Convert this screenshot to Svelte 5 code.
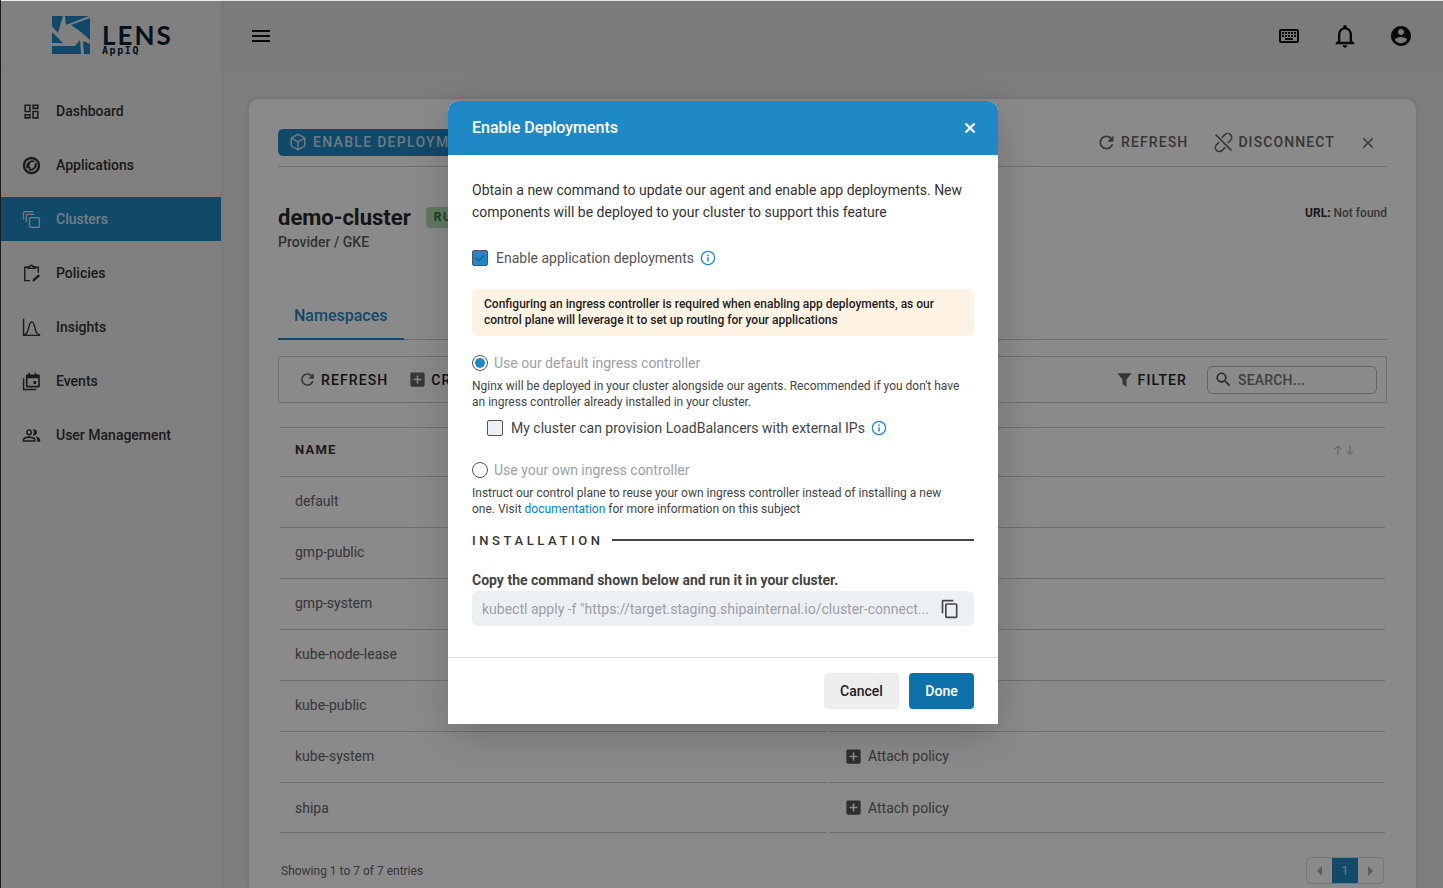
<script>
	const icons = {
		dashboard: 'M19 5v2h-4V5h4M9 5v6H5V5h4m10 8v6h-4v-6h4M9 17v2H5v-2h4M21 3h-8v6h8V3zM11 3H3v10h8V3zm10 8h-8v10h8V11zm-10 4H3v6h8v-6z',
		menu: 'M3 18h18v-2H3v2zm0-5h18v-2H3v2zm0-7v2h18V6H3z',
		keyboard: 'M20 7v10H4V7h16m0-2H4c-1.1 0-1.99.9-1.99 2L2 17c0 1.1.9 2 2 2h16c1.1 0 2-.9 2-2V7c0-1.1-.9-2-2-2zm-9 3h2v2h-2zm0 3h2v2h-2zM8 8h2v2H8zm0 3h2v2H8zm-3 0h2v2H5zm0-3h2v2H5zm3 6h8v2H8zm6-3h2v2h-2zm0-3h2v2h-2zm3 3h2v2h-2zm0-3h2v2h-2z',
		bell: 'M12 22c1.1 0 2-.9 2-2h-4c0 1.1.9 2 2 2zm6-6v-5c0-3.07-1.63-5.64-4.5-6.32V4c0-.83-.67-1.5-1.5-1.5s-1.5.67-1.5 1.5v.68C7.64 5.36 6 7.92 6 11v5l-2 2v1h16v-1l-2-2zm-2 1H8v-6c0-2.48 1.51-4.5 4-4.5s4 2.02 4 4.5v6z',
		account: 'M12 2C6.48 2 2 6.48 2 12s4.48 10 10 10 10-4.48 10-10S17.52 2 12 2zm0 3c1.66 0 3 1.34 3 3s-1.34 3-3 3-3-1.34-3-3 1.34-3 3-3zm0 14.2c-2.5 0-4.71-1.28-6-3.22.03-1.99 4-3.08 6-3.08 1.99 0 5.97 1.09 6 3.08-1.29 1.94-3.5 3.22-6 3.22z',
		users: 'M16.67 13.13C18.04 14.06 19 15.32 19 17v3h4v-3c0-2.18-3.57-3.47-6.33-3.87zM15 12c2.21 0 4-1.79 4-4s-1.79-4-4-4c-.47 0-.91.1-1.33.24C14.5 5.27 15 6.58 15 8s-.5 2.73-1.33 3.76c.42.14.86.24 1.33.24zM9 12c2.21 0 4-1.79 4-4s-1.79-4-4-4-4 1.79-4 4 1.79 4 4 4zm0-6c1.1 0 2 .9 2 2s-.9 2-2 2-2-.9-2-2 .9-2 2-2zM9 13c-2.67 0-8 1.34-8 4v3h16v-3c0-2.66-5.33-4-8-4zm6 5H3v-.99C3.2 16.29 6.3 15 9 15s5.8 1.29 6 2z',
		refresh: 'M17.65 6.35C16.2 4.9 14.21 4 12 4c-4.42 0-7.99 3.58-7.99 8s3.57 8 7.99 8c3.73 0 6.84-2.55 7.73-6h-2.08c-.82 2.33-3.04 4-5.65 4-3.31 0-6-2.69-6-6s2.69-6 6-6c1.66 0 3.14.69 4.22 1.78L13 11h7V4l-2.35 2.35z',
		search: 'M15.5 14h-.79l-.28-.27C15.41 12.59 16 11.11 16 9.5 16 5.91 13.09 3 9.5 3S3 5.91 3 9.5 5.91 16 9.5 16c1.61 0 3.09-.59 4.23-1.57l.27.28v.79l5 4.99L20.49 19l-4.99-5zm-6 0C7.01 14 5 11.99 5 9.5S7.01 5 9.5 5 14 7.01 14 9.5 11.99 14 9.5 14z',
		add: 'M19 3H5c-1.11 0-2 .9-2 2v14c0 1.1.89 2 2 2h14c1.1 0 2-.9 2-2V5c0-1.1-.9-2-2-2zm-2 10h-4v4h-2v-4H7v-2h4V7h2v4h4v2z',
		copy: 'M16 1H4c-1.1 0-2 .9-2 2v14h2V3h12V1zm3 4H8c-1.1 0-2 .9-2 2v14c0 1.1.9 2 2 2h11c1.1 0 2-.9 2-2V7c0-1.1-.9-2-2-2zm0 16H8V7h11v14z',
		close: 'M19 6.41L17.59 5 12 10.59 6.41 5 5 6.41 10.59 12 5 17.59 6.41 19 12 13.41 17.59 19 19 17.59 13.41 12z',
		filter: 'M3 4h18l-6.500 8v9l-5-3v-6z'
	};

	const nav = [
		{ label: 'Dashboard', icon: 'dashboard' },
		{ label: 'Applications', icon: 'apps' },
		{ label: 'Clusters', icon: 'clusters', active: true },
		{ label: 'Policies', icon: 'policies' },
		{ label: 'Insights', icon: 'insights' },
		{ label: 'Events', icon: 'events' },
		{ label: 'User Management', icon: 'users' }
	];

	const namespaces = ['default', 'gmp-public', 'gmp-system', 'kube-node-lease', 'kube-public', 'kube-system', 'shipa'];
</script>

{#snippet icon(d, cls = '')}
	<svg class="icon {cls}" viewBox="0 0 24 24" fill="currentColor" aria-hidden="true"><path {d} /></svg>
{/snippet}

{#snippet info()}
	<svg class="info" viewBox="0 0 16 16" fill="none" stroke="currentColor" stroke-width="1.3" aria-hidden="true">
		<circle cx="8" cy="8" r="6.6" />
		<path d="M8 7.2v4.2" stroke-width="1.5" />
		<path d="M8 4.4v1.5" stroke-width="1.5" />
	</svg>
{/snippet}

<div class="app">
	<aside class="sidebar">
		<div class="brand">
			<svg class="mark" viewBox="0 0 38 38" aria-hidden="true">
				<path d="M0 0h11L6 17 0 10zM13 0h24L14 9zM19 9 38 2v22l-9-8zM31 25l7 3v10h-6zM16 38l12-14 1 14zM0 38v-8h23l-7 8zM0 16l11 11H0z" />
			</svg>
			<div class="wordmark">
				<span class="lens">LENS</span>
				<span class="appiq">AppIQ</span>
			</div>
		</div>
		<nav class="nav">
			{#each nav as item}
				<div class="nav-item" class:active={item.active}>
					{#if item.icon === 'apps'}
						<svg class="icon" viewBox="0 0 24 24" fill="none" stroke="currentColor" aria-hidden="true">
							<circle cx="12" cy="12" r="9.500" stroke-width="3" />
							<path d="M7 15.500c-2-5 3-10.500 8.500-8.500M17 8.500c2 5-3 10.500-8.500 8.500" stroke-width="2.400" />
							<path d="M10.500 8c-3 2-3 6 0 8" stroke-width="2.200" />
						</svg>
					{:else if item.icon === 'clusters'}
						<svg class="icon" viewBox="0 0 24 24" fill="none" stroke="currentColor" stroke-width="1.6" aria-hidden="true">
							<path d="M2 12V3.5A1.5 1.5 0 0 1 3.500 2H14" />
							<path d="M5.500 15V7A1.500 1.500 0 0 1 7 5.500h8.500" />
							<rect x="9.500" y="9.500" width="12.500" height="12.500" rx="1.500" />
						</svg>
					{:else if item.icon === 'policies'}
						<svg class="icon" viewBox="0 0 24 24" fill="none" stroke="currentColor" stroke-width="1.8" aria-hidden="true">
							<path d="M7 4H3.500v17H10M17 4h3.500v7" />
							<path d="M7.500 5.500V3.500H10a2 2 0 0 1 4 0h2.500v2z" />
							<path d="M13 22l1-3 7-6 2 2-7 6z" fill="currentColor" stroke="none" />
						</svg>
					{:else if item.icon === 'insights'}
						<svg class="icon" viewBox="0 0 24 24" fill="none" stroke="currentColor" stroke-width="1.7" aria-hidden="true">
							<path d="M2 1v21h21" />
							<path d="M2.500 21c4 0 5-4 6-9s2-7 4-7 3 3 4 8 2 8 6 8" />
						</svg>
					{:else if item.icon === 'events'}
						<svg class="icon" viewBox="0 0 24 24" aria-hidden="true">
							<path fill="currentColor" d="M8 1h2v2h6V1h2v2h3a1.500 1.500 0 0 1 1.500 1.500V18a1.500 1.500 0 0 1-1.500 1.500H6.500A1.500 1.500 0 0 1 5 18V4.500A1.500 1.500 0 0 1 6.500 3H8zM7 8v9.500h13.500V8zM14.500 11.500H18V15h-3.500z" fill-rule="evenodd" />
							<path fill="none" stroke="currentColor" stroke-width="1.800" d="M2 8v14.200h16" />
						</svg>
					{:else}
						{@render icon(icons[item.icon])}
					{/if}
					<span>{item.label}</span>
				</div>
			{/each}
		</nav>
	</aside>

	<div class="main">
		<header class="topbar">
			{@render icon(icons.menu, 'menu')}
			<div class="top-actions">
				{@render icon(icons.keyboard)}
				{@render icon(icons.bell, 'bell')}
				{@render icon(icons.account)}
			</div>
		</header>

		<div class="content">
			<section class="card">
				<div class="card-actions">
					<button class="enable">
						<svg class="icon" viewBox="0 0 24 24" fill="none" stroke="currentColor" stroke-width="2" aria-hidden="true">
							<path d="M21 16V8a2 2 0 0 0-1-1.730l-7-4a2 2 0 0 0-2 0l-7 4A2 2 0 0 0 3 8v8a2 2 0 0 0 1 1.730l7 4a2 2 0 0 0 2 0l7-4A2 2 0 0 0 21 16z" />
							<path d="M3.270 6.960 12 12.010l8.730-5.050M12 22.080V12" />
						</svg>
						ENABLE DEPLOYMENTS
					</button>
					<div class="right-actions">
						<button class="ghost">{@render icon(icons.refresh)} REFRESH</button>
						<button class="ghost">
							<svg class="icon" viewBox="0 0 24 24" fill="none" stroke="currentColor" stroke-width="1.800" aria-hidden="true">
								<path d="M10 6.500 13.500 3a4.500 4.500 0 0 1 6.500 6.500L17 12.500M14 17.500 10.500 21A4.500 4.500 0 0 1 4 14.500L7 11.500M9 9l7 7M3 3l18 18" />
							</svg>
							DISCONNECT
						</button>
						{@render icon(icons.close, 'dismiss')}
					</div>
				</div>

				<div class="cluster">
					<div>
						<div class="cluster-name">
							<h1>demo-cluster</h1>
							<span class="badge">RUNNING</span>
						</div>
						<div class="provider">Provider / GKE</div>
					</div>
					<div class="url"><b>URL:</b> Not found</div>
				</div>

				<div class="tabs"><span class="tab">Namespaces</span></div>

				<div class="toolbar">
					<button class="tool">{@render icon(icons.refresh, 'muted')} REFRESH</button>
					<button class="tool">{@render icon(icons.add, 'muted')} CREATE NAMESPACE</button>
					<div class="spacer"></div>
					<button class="tool filter">{@render icon(icons.filter, 'muted')} FILTER</button>
					<div class="search">{@render icon(icons.search)} SEARCH...</div>
				</div>

				<div class="table">
					<div class="cell head">NAME</div>
					<div class="cell head sort">
						<svg class="arrows" viewBox="0 0 20 10" fill="none" stroke="currentColor" aria-hidden="true">
							<path d="M4 10V1M.8 4 4 .8 7.200 4M16 0v9M12.800 6 16 9.200 19.200 6" />
						</svg>
					</div>
					{#each namespaces as name}
						<div class="cell">{name}</div>
						<div class="cell attach">{@render icon(icons.add)} Attach policy</div>
					{/each}
				</div>

				<div class="table-foot">
					<span>Showing 1 to 7 of 7 entries</span>
					<div class="pager">
						<i class="tri left"></i>
						<span class="page">1</span>
						<i class="tri right"></i>
					</div>
				</div>
			</section>
		</div>
	</div>

	<div class="overlay">
		<div class="modal">
			<div class="modal-head">
				<h2>Enable Deployments</h2>
				<svg class="modal-x" viewBox="0 0 12 12" aria-hidden="true"><path d="M1.500 1.500l9 9M10.500 1.500l-9 9" stroke="currentColor" stroke-width="2.400" /></svg>
			</div>
			<div class="modal-body">
				<p class="intro">Obtain a new command to update our agent and enable app deployments. New components will be deployed to your cluster to support this feature</p>

				<div class="check-row first">
					<span class="box checked">
						<svg viewBox="0 0 16 16" aria-hidden="true"><path d="M3.500 8l3 3 6-6" fill="none" stroke="currentColor" stroke-width="1.500" /></svg>
					</span>
					<span>Enable application deployments</span>
					{@render info()}
				</div>

				<div class="notice">Configuring an ingress controller is required when enabling app deployments, as our control plane will leverage it to set up routing for your applications</div>

				<div class="radio-row on"><span class="radio"></span>Use our default ingress controller</div>
				<p class="hint">Nginx will be deployed in your cluster alongside our agents. Recommended if you don't have an ingress controller already installed in your cluster.</p>
				<div class="check-row nested">
					<span class="box"></span>
					<span>My cluster can provision LoadBalancers with external IPs</span>
					{@render info()}
				</div>

				<div class="radio-row second"><span class="radio"></span>Use your own ingress controller</div>
				<p class="hint">Instruct our control plane to reuse your own ingress controller instead of installing a new one. Visit <a href="#docs">documentation</a> for more information on this subject</p>

				<div class="section-title"><span>INSTALLATION</span><i></i></div>
				<div class="copy-label">Copy the command shown below and run it in your cluster.</div>
				<div class="command">
					<span>kubectl apply -f "https://target.staging.shipainternal.io/cluster-connect...</span>
					{@render icon(icons.copy)}
				</div>
			</div>
			<div class="modal-foot">
				<button class="cancel">Cancel</button>
				<button class="done">Done</button>
			</div>
		</div>
	</div>
</div>

<style>
	:global(body) {
		font-family: Roboto, 'Liberation Sans', sans-serif;
		font-size: 14px;
		color: #333;
		overflow: hidden;
	}

	button {
		font: inherit;
		border: 0;
		background: none;
		padding: 0;
		color: inherit;
		display: flex;
		align-items: center;
	}

	.app {
		width: 1443px;
		height: 888px;
		display: flex;
		overflow: hidden;
		position: relative;
		background: #e6e6e6;
	}

	.icon {
		width: 20px;
		height: 20px;
		flex: none;
	}

	/* sidebar */
	.sidebar {
		width: 221px;
		flex: none;
		background: #ececec;
		border-left: 1px solid #333;
		box-sizing: border-box;
		box-shadow: 2px 0 3px rgba(0, 0, 0, 0.03);
		z-index: 1;
	}

	.brand {
		height: 70px;
		box-sizing: border-box;
		border-bottom: 1px solid #f2f2f2;
		padding: 16px 0 0 51px;
		display: flex;
		gap: 12px;
	}

	.mark {
		width: 38px;
		height: 38px;
		fill: #1f86c2;
	}

	.wordmark {
		display: flex;
		flex-direction: column;
		padding-top: 6px;
	}

	.lens {
		font-family: Lato, sans-serif;
		font-size: 26px;
		line-height: 26px;
		letter-spacing: 2px;
		font-weight: 700;
		color: #0a2238;
	}

	.appiq {
		font-family: 'DejaVu Sans Mono', monospace;
		font-size: 10px;
		line-height: 9px;
		margin-top: -2px;
		font-weight: 700;
		letter-spacing: 1.600px;
		color: #0a2238;
	}

	.nav {
		display: flex;
		flex-direction: column;
		gap: 10px;
		padding-top: 19px;
	}

	.nav-item {
		height: 44px;
		display: flex;
		align-items: center;
		gap: 15px;
		padding-left: 21px;
		font-weight: 500;
		color: #333;
	}

	.nav-item .icon {
		width: 19px;
		height: 19px;
	}

	.nav-item.active {
		background: #2088c4;
		color: #fff;
	}

	.nav-item.active span,
	.nav-item.active .icon {
		opacity: 0.8;
	}

	/* main */
	.main {
		flex: 1;
		min-width: 0;
		display: flex;
		flex-direction: column;
	}

	.topbar {
		height: 70px;
		flex: none;
		box-sizing: border-box;
		display: flex;
		align-items: center;
		justify-content: space-between;
		padding: 2px 30px 0 28px;
		color: #111;
		background: #e4e4e4;
	}

	.topbar .icon {
		width: 24px;
		height: 24px;
	}

	.topbar .bell {
		width: 28px;
		height: 28px;
		margin: -2px;
	}

	.top-actions {
		display: flex;
		gap: 32px;
	}

	.content {
		flex: 1;
		padding: 29px 27px 0 28px;
		background: #e8e8e8;
	}

	.card {
		background: #fff;
		border-radius: 10px 10px 0 0;
		box-shadow: 0 0 6px rgba(0, 0, 0, 0.12);
		padding: 30px 29px 0;
		height: 789px;
		box-sizing: border-box;
	}

	.card-actions {
		display: flex;
		justify-content: space-between;
		height: 37px;
		border-bottom: 1px solid #ccc;
		align-items: flex-start;
	}

	.enable {
		height: 27px;
		background: #2088c4;
		color: rgba(255, 255, 255, 0.75);
		border-radius: 5px;
		padding: 0 11px 2px;
		gap: 6px;
		font-weight: 500;
		letter-spacing: 1.300px;
	}

	.enable .icon {
		width: 18px;
		height: 18px;
	}

	.right-actions {
		display: flex;
		align-items: center;
		height: 27px;
	}

	.ghost {
		gap: 4px;
		font-weight: 500;
		letter-spacing: 1.100px;
		color: #666;
		margin-right: 24px;
		padding-bottom: 1px;
	}

	.ghost:first-child {
		margin-right: 25px;
	}

	.ghost .icon {
		width: 21px;
		height: 21px;
	}

	.dismiss {
		width: 18px;
		height: 18px;
		color: #666;
		margin-right: 10px;
	}

	.cluster {
		display: flex;
		justify-content: space-between;
		padding-top: 37px;
	}

	.cluster-name {
		display: flex;
		align-items: center;
		gap: 15px;
		height: 26px;
	}

	h1 {
		margin: 0;
		font-size: 22px;
		font-weight: 700;
		color: #2a2a2a;
	}

	.badge {
		background: #b5e0b5;
		color: #2e7d32;
		border-radius: 4px;
		height: 21px;
		padding: 0 8px;
		line-height: 21px;
		font-size: 12px;
		font-weight: 700;
		letter-spacing: 1.500px;
	}

	.provider {
		margin-top: 4px;
		font-weight: 500;
		color: #5c5c5c;
		line-height: 16px;
	}

	.url {
		font-size: 12px;
		font-weight: 500;
		color: #666;
		padding-top: 1px;
		line-height: 16px;
	}

	.url b {
		color: #333;
		font-weight: 700;
	}

	.tabs {
		margin-top: 46px;
		border-bottom: 1px solid #ccc;
		height: 44px;
		box-sizing: border-box;
	}

	.tab {
		display: block;
		box-sizing: border-box;
		width: 126px;
		height: 44px;
		padding: 10px 0 0 16px;
		font-size: 16px;
		line-height: 19px;
		font-weight: 500;
		color: #2088c4;
		border-bottom: 2px solid #2088c4;
	}

	.toolbar {
		margin-top: 16px;
		height: 47px;
		box-sizing: border-box;
		border: 1px solid #ccc;
		border-radius: 2px;
		display: flex;
		align-items: center;
		padding-left: 19px;
		padding-right: 9px;
	}

	.tool {
		gap: 4px;
		font-weight: 500;
		letter-spacing: 1.100px;
		color: #222;
		margin-right: 20px;
	}

	.tool .icon {
		width: 19px;
		height: 19px;
	}

	.muted {
		color: #666;
	}

	.spacer {
		flex: 1;
	}

	.tool.filter {
		margin-right: 20px;
	}

	.search {
		width: 170px;
		height: 28px;
		box-sizing: border-box;
		border: 1px solid #bbb;
		border-radius: 5px;
		display: flex;
		align-items: center;
		gap: 5px;
		padding-left: 6px;
		font-weight: 500;
		color: #777;
		letter-spacing: 0.200px;
	}

	.search .icon {
		width: 19px;
		height: 19px;
		color: #555;
	}

	.table {
		margin: 24px 2px 0;
		display: grid;
		grid-template-columns: 547px 556px;
		column-gap: 2px;
		border-top: 1px solid #ccc;
	}

	.cell {
		height: 51px;
		box-sizing: border-box;
		border-bottom: 1px solid #ccc;
		padding-left: 15px;
		padding-bottom: 2px;
		display: flex;
		align-items: center;
		color: #666;
	}

	.cell:nth-child(-n + 2) {
		height: 49px;
		padding-bottom: 5px;
	}

	.cell:nth-last-child(-n + 2) {
		height: 50px;
		padding-bottom: 0;
	}

	.head {
		font-size: 13px;
		font-weight: 700;
		letter-spacing: 1.200px;
		color: #333;
	}

	.sort {
		justify-content: flex-end;
		padding-right: 31px;
		color: #aaa;
	}

	.arrows {
		width: 20px;
		height: 10px;
	}

	.attach {
		gap: 5px;
		padding-left: 15px;
	}

	.attach .icon {
		width: 19px;
		height: 19px;
		color: #555;
	}

	.table-foot {
		display: flex;
		justify-content: space-between;
		align-items: center;
		margin: 24px 3px 0;
		font-size: 12px;
		color: #666;
	}

	.pager {
		width: 56px;
		height: 25px;
		box-sizing: content-box;
		border: 1px solid #d9d9d9;
		border-radius: 5px;
		display: flex;
		align-items: center;
		justify-content: space-between;
		padding: 0 10px;
	}

	.page {
		width: 26px;
		height: 25px;
		line-height: 25px;
		text-align: center;
		background: #2088c4;
		color: rgba(255, 255, 255, 0.75);
		font-size: 13px;
	}

	.tri {
		width: 0;
		height: 0;
		border-top: 5px solid transparent;
		border-bottom: 5px solid transparent;
	}

	.tri.left {
		border-right: 5px solid #aaa;
	}

	.tri.right {
		border-left: 5px solid #aaa;
	}

	/* modal */
	.overlay {
		position: absolute;
		inset: 1px 0 0;
		background: rgba(0, 0, 0, 0.46);
		z-index: 5;
		display: flex;
		justify-content: center;
		align-items: flex-start;
		padding-top: 100px;
		padding-left: 3px;
	}

	.modal {
		width: 550px;
		background: #fff;
		border-radius: 10px 10px 0 0;
		box-shadow: 0 10px 40px rgba(0, 0, 0, 0.18);
		color: #333;
	}

	.modal-head {
		height: 54px;
		background: #1f89c5;
		border-radius: 10px 10px 0 0;
		color: #fff;
		display: flex;
		align-items: center;
		justify-content: space-between;
		padding: 0 22px 0 24px;
	}

	h2 {
		margin: 0 0 2px;
		font-size: 16px;
		font-weight: 500;
	}

	.modal-x {
		width: 12px;
		height: 12px;
	}

	.modal-body {
		padding: 24px 24px 31px;
	}

	.intro {
		margin: 0;
		font-size: 14px;
		line-height: 22px;
	}

	.check-row {
		display: flex;
		align-items: center;
		height: 22px;
		font-size: 14px;
		color: #555;
		gap: 8px;
	}

	.check-row.first {
		margin-top: 24px;
	}

	.check-row.nested {
		margin: 7px 0 0 15px;
		color: #444;
	}

	.box {
		width: 14px;
		height: 14px;
		border: 1px solid #555;
		border-radius: 2px;
		background: #eef1f4;
		flex: none;
		display: block;
	}

	.box.checked {
		background: #2088c4;
		color: #17628f;
	}

	.box svg {
		display: block;
	}

	.info {
		width: 16px;
		height: 16px;
		color: #1f89c5;
		flex: none;
		margin-left: -2px;
	}

	.notice {
		margin-top: 20px;
		background: #fff4e3;
		border-radius: 5px;
		padding: 7px 12px 8px;
		font-size: 12px;
		line-height: 16px;
		font-weight: 500;
		color: #222;
	}

	.radio-row {
		display: flex;
		align-items: center;
		gap: 6px;
		height: 22px;
		font-size: 14px;
		color: #9aa0a6;
	}

	.radio-row.on {
		margin-top: 16px;
	}

	.radio-row.second {
		margin-top: 20px;
	}

	.radio {
		width: 14px;
		height: 14px;
		border: 1px solid #555;
		border-radius: 50%;
		background: #fff;
		flex: none;
		position: relative;
	}

	.on .radio::after {
		content: '';
		position: absolute;
		inset: 2px;
		border-radius: 50%;
		background: #1f89c5;
	}

	.hint {
		margin: 4px 0 0;
		max-width: 490px;
		font-size: 12px;
		line-height: 16px;
		color: #444;
	}

	.hint a {
		color: #0a7ad1;
		text-decoration: none;
	}

	.section-title {
		display: flex;
		align-items: center;
		gap: 8px;
		margin-top: 15px;
		height: 16px;
		font-size: 13px;
		font-weight: 500;
		letter-spacing: 3.600px;
		color: #333;
	}

	.section-title i {
		flex: 1;
		height: 2px;
		background: #444;
	}

	.copy-label {
		margin-top: 24px;
		line-height: 16px;
		font-weight: 700;
		color: #444;
	}

	.command {
		margin-top: 3px;
		height: 35px;
		background: #edf0f3;
		border-radius: 6px;
		display: flex;
		align-items: center;
		justify-content: space-between;
		padding: 0 14px 0 10px;
		color: #9aa0a6;
	}

	.command span {
		white-space: nowrap;
	}

	.command .icon {
		color: #444;
	}

	.modal-foot {
		border-top: 1px solid #ddd;
		padding: 15px 24px;
		display: flex;
		justify-content: flex-end;
		gap: 10px;
	}

	.modal-foot button {
		height: 36px;
		border-radius: 4px;
		font-weight: 500;
		justify-content: center;
	}

	.cancel {
		width: 75px;
		background: #eee;
		color: #222;
	}

	.done {
		width: 65px;
		background: #0e72a8;
		color: #fff;
	}
</style>
